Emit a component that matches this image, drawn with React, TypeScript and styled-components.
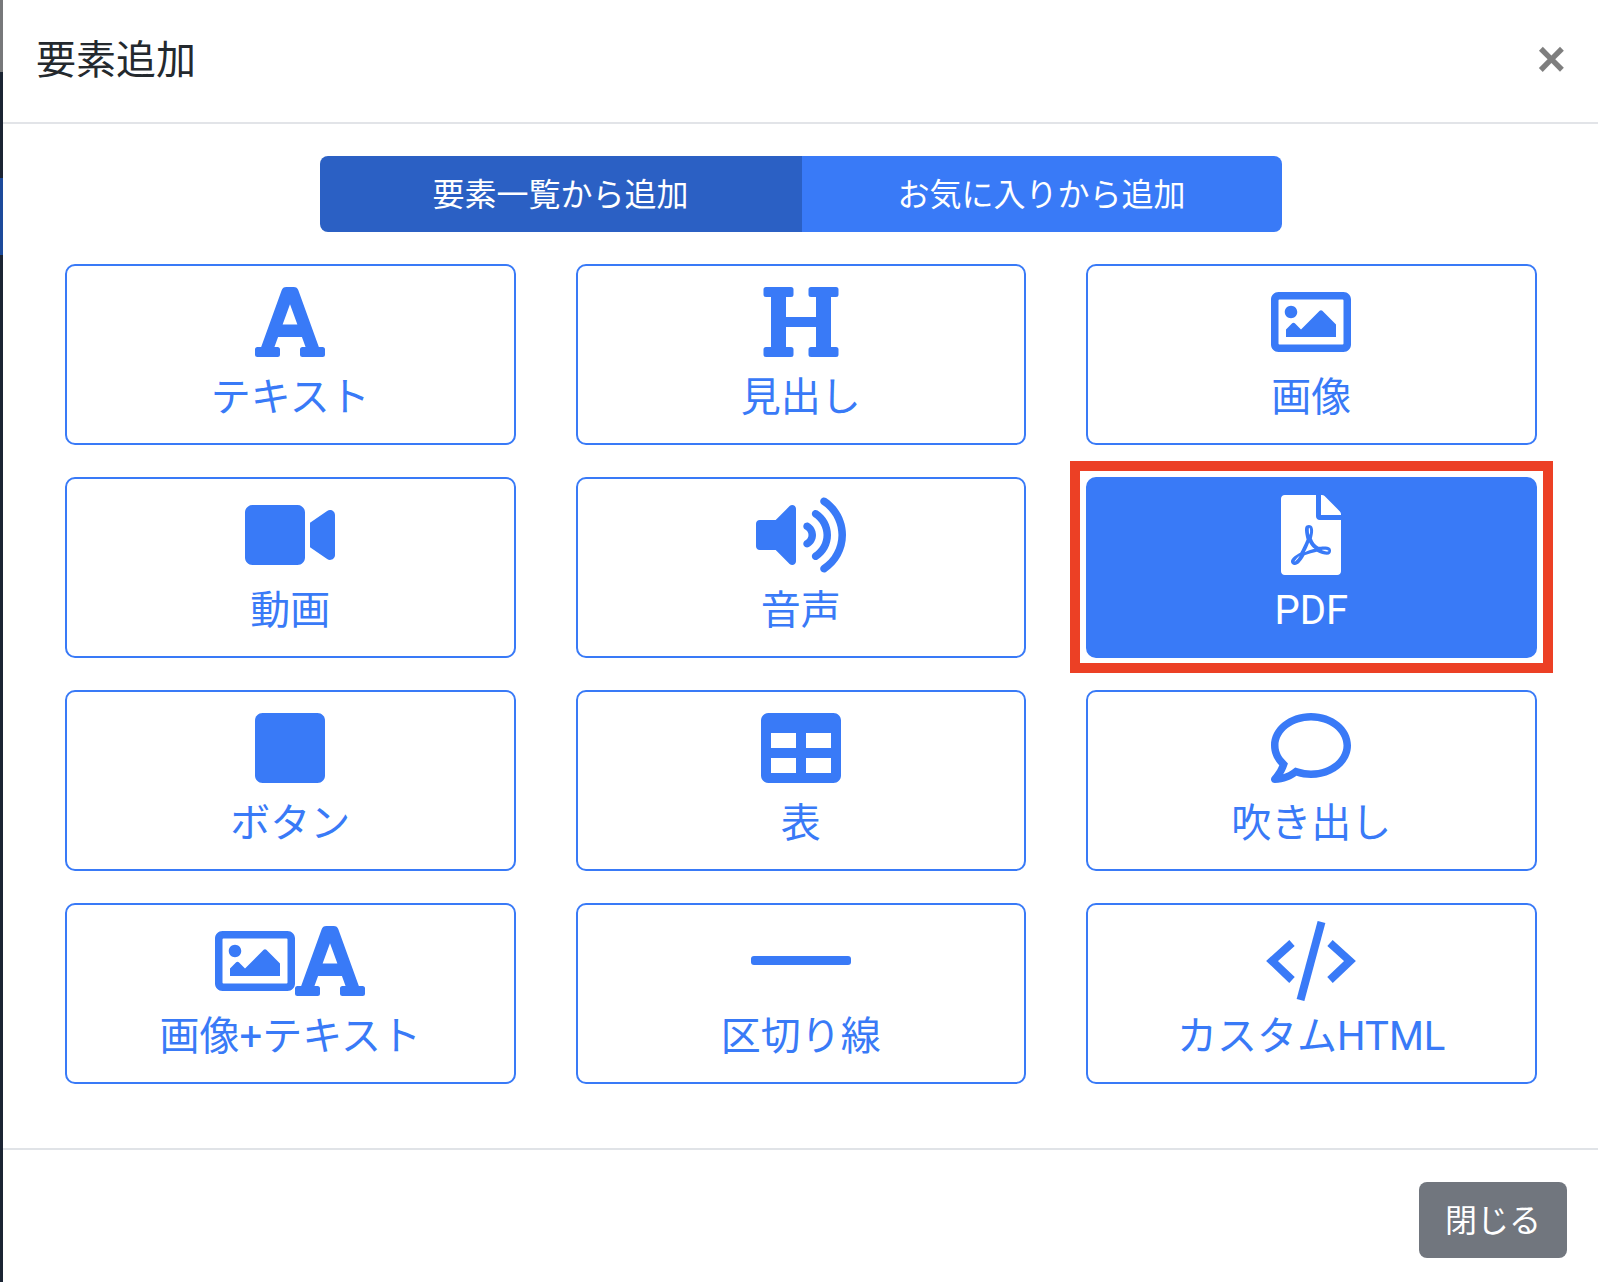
import React from 'react';
import styled, { createGlobalStyle } from 'styled-components';
import {
  FaFilePdf,
  FaFont,
  FaHeading,
  FaRegComment,
  FaRegImage,
  FaSquare,
  FaTable,
  FaVideo,
  FaVolumeUp,
} from 'react-icons/fa';

const BLUE = '#397af7';

const GlobalStyle = createGlobalStyle`
  html, body {
    margin: 0;
    padding: 0;
    background: #fff;
  }
  body {
    font-family: Roboto, "Noto Sans CJK JP", sans-serif;
    color: #24292e;
  }
`;

const Page = styled.div`
  display: flex;
  width: 1598px;
  height: 1282px;
  overflow: hidden;
`;

const Backdrop = styled.div`
  width: 3px;
  flex: none;
  display: flex;
  flex-direction: column;
  background: #1b2433;
`;

const BackdropBand = styled.div<{ $height: number; $color: string }>`
  height: ${p => p.$height}px;
  background: ${p => p.$color};
`;

const Modal = styled.div`
  flex: 1;
  display: flex;
  flex-direction: column;
  background: #fff;
`;

const Header = styled.div`
  height: 122px;
  flex: none;
  display: flex;
  align-items: center;
  justify-content: space-between;
  padding: 0 32px 0 33px;
  border-bottom: 2px solid #e2e4e8;
`;

const Title = styled.h5`
  margin: 0;
  font-size: 40px;
  font-weight: 400;
  line-height: 1.2;
`;

const CloseIcon = styled.button`
  padding: 0 0 4px;
  border: none;
  background: none;
  color: #000;
  opacity: 0.5;
  font-family: "Liberation Sans", sans-serif;
  font-size: 50px;
  font-weight: 700;
  line-height: 1;
`;

const Body = styled.div`
  flex: 1;
  display: flex;
  flex-direction: column;
  align-items: center;
  padding-top: 32px;
`;

const Tabs = styled.div`
  display: flex;
  width: 962px;
  height: 76px;
  border-radius: 8px;
  overflow: hidden;
`;

const Tab = styled.div<{ $active?: boolean }>`
  flex: none;
  box-sizing: border-box;
  width: ${p => (p.$active ? '482px' : '480px')};
  display: flex;
  align-items: center;
  justify-content: center;
  padding-bottom: 4px;
  background: ${p => (p.$active ? '#2b60c4' : BLUE)};
  color: #fff;
  font-size: 32px;
`;

const Grid = styled.div`
  display: grid;
  grid-template-columns: repeat(3, 450.5px);
  grid-auto-rows: 181px;
  column-gap: 60px;
  row-gap: 32px;
  margin: 32px 0 0 0.5px;
`;

const ElementButton = styled.div<{ $selected?: boolean }>`
  position: relative;
  box-sizing: border-box;
  display: flex;
  flex-direction: column;
  align-items: center;
  padding-top: 16px;
  border: 2px solid ${BLUE};
  border-radius: 10px;
  background: ${p => (p.$selected ? BLUE : '#fff')};
  color: ${p => (p.$selected ? '#fff' : BLUE)};
`;

const IconRow = styled.div`
  display: flex;
  height: 80px;
`;

const IconSlot = styled.span<{ $width: number }>`
  display: block;
  flex: none;
  width: ${p => p.$width}px;
  height: 80px;

  svg {
    display: block;
    width: 100%;
    height: 100%;
  }
`;

const Label = styled.div`
  margin-top: 7px;
  font-size: 40px;
  line-height: 58px;
  white-space: nowrap;
`;

const Highlight = styled.div`
  position: absolute;
  inset: -18px -18px -17px;
  border: 10px solid #ec4025;
  pointer-events: none;
`;

const Footer = styled.div`
  height: 134px;
  flex: none;
  box-sizing: border-box;
  display: flex;
  justify-content: flex-end;
  padding: 32px 31px 0 0;
  border-top: 2px solid #e0e3e7;
`;

const CloseButton = styled.button`
  width: 148px;
  height: 76px;
  padding: 0 0 4px;
  border: none;
  border-radius: 8px;
  background: #71767e;
  color: #fff;
  font-family: inherit;
  font-size: 32px;
`;

const DividerIcon = () => (
  <svg viewBox="0 0 100 80" fill="currentColor">
    <rect x="0" y="35" width="100" height="9" rx="3" />
  </svg>
);

const CodeIcon = () => (
  <svg viewBox="0 0 90 80" fill="none" stroke="currentColor" strokeWidth="8">
    <polyline points="26,22 6,40 26,59" />
    <polyline points="64,22 84,40 64,59" />
    <line x1="55.5" y1="1" x2="34.5" y2="79" />
  </svg>
);

// widths follow each glyph's viewBox at an 80px icon height
const elements = [
  { label: 'テキスト', icons: [{ Icon: FaFont, width: 70 }] },
  { label: '見出し', icons: [{ Icon: FaHeading, width: 80 }] },
  { label: '画像', icons: [{ Icon: FaRegImage, width: 80 }] },
  { label: '動画', icons: [{ Icon: FaVideo, width: 90 }] },
  { label: '音声', icons: [{ Icon: FaVolumeUp, width: 90 }] },
  { label: 'PDF', icons: [{ Icon: FaFilePdf, width: 60 }], selected: true },
  { label: 'ボタン', icons: [{ Icon: FaSquare, width: 70 }] },
  { label: '表', icons: [{ Icon: FaTable, width: 80 }] },
  { label: '吹き出し', icons: [{ Icon: FaRegComment, width: 80 }] },
  {
    label: '画像+テキスト',
    icons: [
      { Icon: FaRegImage, width: 80 },
      { Icon: FaFont, width: 70 },
    ],
  },
  { label: '区切り線', icons: [{ Icon: DividerIcon, width: 100 }] },
  { label: 'カスタムHTML', icons: [{ Icon: CodeIcon, width: 90 }] },
];

const App: React.FC = () => (
  <Page>
    <GlobalStyle />
    <Backdrop>
      <BackdropBand $height={72} $color="#77787a" />
      <BackdropBand $height={106} $color="#1b2433" />
      <BackdropBand $height={77} $color="#1c4a9b" />
    </Backdrop>
    <Modal>
      <Header>
        <Title>要素追加</Title>
        <CloseIcon aria-label="閉じる">×</CloseIcon>
      </Header>
      <Body>
        <Tabs>
          <Tab $active>要素一覧から追加</Tab>
          <Tab>お気に入りから追加</Tab>
        </Tabs>
        <Grid>
          {elements.map(el => (
            <ElementButton key={el.label} $selected={el.selected}>
              <IconRow>
                {el.icons.map(({ Icon, width }, i) => (
                  <IconSlot key={i} $width={width}>
                    <Icon />
                  </IconSlot>
                ))}
              </IconRow>
              <Label>{el.label}</Label>
              {el.selected && <Highlight />}
            </ElementButton>
          ))}
        </Grid>
      </Body>
      <Footer>
        <CloseButton>閉じる</CloseButton>
      </Footer>
    </Modal>
  </Page>
);

export default App;
